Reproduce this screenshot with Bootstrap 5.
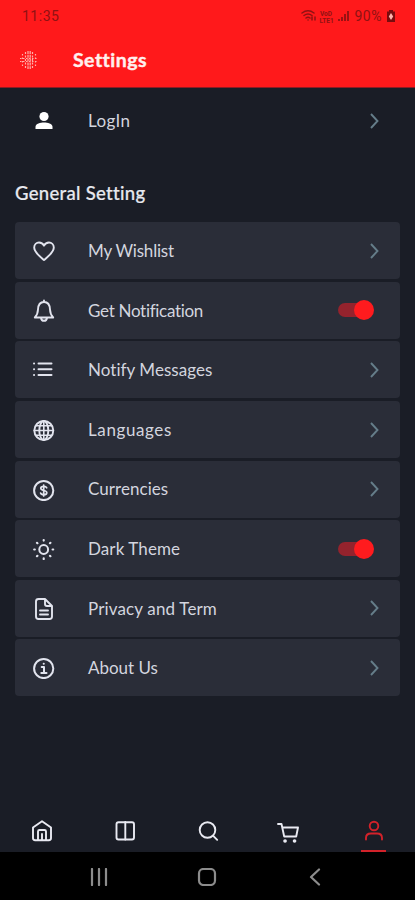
<!DOCTYPE html>
<html lang="en">
<head>
<meta charset="utf-8">
<meta name="viewport" content="width=device-width, initial-scale=1">
<title>Settings</title>
<link href="https://cdn.jsdelivr.net/npm/bootstrap@5.3.0/dist/css/bootstrap.min.css" rel="stylesheet">
<style>
body{background:#1a1d26;font-family:Lato,"Open Sans",sans-serif;font-variant-ligatures:none;color:#d3d5df;overflow:hidden}
svg{display:block;flex:none;fill:none;stroke:currentColor;stroke-width:1.9;stroke-linecap:round;stroke-linejoin:round}
.screen{height:900px}
.topbar{height:88px;background:#ff191b;border-bottom:1px solid #8f1b22}
.status{height:32px;padding:0 19px 0 22px;color:#8f1213;font:14px/32px Roboto,sans-serif}
.status svg{stroke-width:1.3}
.clock,.pct{letter-spacing:.5px}
.title-row{height:56px;padding-left:20px}
.title-row h1{font-size:19.5px;font-weight:700;color:#fff0ee;margin-left:35px;letter-spacing:.45px;-webkit-text-stroke:.4px}
.entry{height:57px;padding:0 20px 0 17px;background:#2a2d38;border-radius:4px;margin-bottom:2.6px;font-size:17px}
.entry .ico{width:23px;height:23px;color:#e2e4ee}
.entry .lbl{margin-left:33px;white-space:nowrap}
.entry .chev{width:12px;height:18px;color:#657d89;stroke-width:1.9;stroke-linecap:butt;stroke-linejoin:miter}
.l0{letter-spacing:.4px}.l1{letter-spacing:-.2px}.l2{letter-spacing:-.3px}.l3{letter-spacing:.04px}.l4{letter-spacing:.6px}.l5{letter-spacing:.05px}.l6{letter-spacing:.1px}.l7{letter-spacing:.15px}.l8{letter-spacing:-.03px}
.login{background:transparent;margin:4px 15px 0}
.login .ico{color:#fff;fill:currentColor;stroke:none}
.heading{font-size:18.5px;font-weight:500;margin:28px 0 0 15px;height:32px;line-height:32px;color:#e8e9ef;letter-spacing:.3px;-webkit-text-stroke:.2px}
.entries{margin:13.3px 15px 0}
.entry .form-switch{padding:0;min-height:0;margin:0 6px 0 0}
.toggle{width:36px;height:20px;border-radius:10px;position:relative}
.toggle::before{content:"";position:absolute;left:0;top:3px;width:32px;height:14px;border-radius:7px;background:#94232d}
.toggle::after{content:"";position:absolute;right:0;top:0;width:20px;height:20px;border-radius:50%;background:#ff1b1e}
.tabs{height:42px;color:#e9eaf2}
.tabs a{color:inherit;width:83px}
.tabs .active{color:#d2222a}
.tabs .bar{width:25px;height:2.5px;background:#d2222a}
.sys{height:48px;background:#000;color:#8c8c8c;padding:2px 46px 0 45px}
.sys svg{stroke-width:2.2}
</style>
</head>
<body>
<div class="screen d-flex flex-column">
  <header class="topbar">
    <div class="status d-flex align-items-center">
      <span class="clock me-auto">11:35</span>
      <svg width="50" height="18" viewBox="0 0 50 18"><path d="M1 6q6-4.500 12 0M3 8.500q4-3 8 0M5 11q2-1.500 4 0M7 13h.1M11 10v3m3-3v3" stroke-width="1.500"/><text x="19" y="8.500" font-size="6.500" font-weight="700" fill="currentColor" stroke="none">VoD</text><text x="18.500" y="15.500" font-size="6.500" font-weight="700" fill="currentColor" stroke="none">LTE1</text><path d="M38 14v-2M41 14v-4M44 14V7M47 14V4" stroke-width="1.800" stroke-linecap="butt"/></svg>
      <span class="ms-1 pct">90%</span>
      <svg class="ms-1" width="10" height="14" viewBox="0 0 10 14"><path d="M3 1h4v1.500h2V13H1V2.500h2z" fill="#780c0e" stroke="none"/><path d="M5 4L2.800 7.500 5 11l2.200-3.500z" fill="#ffb3ad" stroke="none"/></svg>
    </div>
    <div class="title-row d-flex align-items-center">
      <svg width="18" height="20" viewBox="0 0 18 20" color="#ffb0aa"><g stroke-width="1.200" stroke-linecap="butt"><path d="M0 8.500h18M0 11.500h18" stroke-dasharray="1.500 1.500"/><path d="M2.500 4v12M15.500 4v12" stroke-dasharray="1.500 2"/><path d="M5.500 2v17M12.500 2v17" stroke-dasharray="2 1.500"/><path d="M8 1v18M10.200 1v18" stroke-dasharray="3 .8"/></g></svg>
      <h1 class="mb-0">Settings</h1>
    </div>
  </header>

  <main class="flex-grow-1">
    <div class="entry login d-flex align-items-center">
      <svg class="ico" viewBox="0 0 23 23"><circle cx="12" cy="7.500" r="4.600"/><path d="M3.500 20v-2.200c0-3 5-4.300 8.500-4.300s8.500 1.300 8.500 4.300V20z"/></svg>
      <span class="lbl me-auto l0">LogIn</span>
      <svg class="chev" viewBox="0 0 12 18"><path d="M3 2l6.500 7L3 16"/></svg>
    </div>
    <h2 class="heading">General Setting</h2>
    <div class="entries">
      <div class="entry d-flex align-items-center">
        <svg class="ico" viewBox="0 0 23 23"><path d="M12 21C8 17.500 2.200 13.500 2.200 8.500 2.200 5.500 4.500 3.500 7 3.500c2.200 0 4 1.200 5 3.200 1-2 2.800-3.200 5-3.200 2.500 0 4.800 2 4.800 5C21.800 13.500 16 17.500 12 21z"/></svg>
        <span class="lbl me-auto l1">My Wishlist</span>
        <svg class="chev" viewBox="0 0 12 18"><path d="M3 2l6.500 7L3 16"/></svg>
      </div>
      <div class="entry d-flex align-items-center">
        <svg class="ico" viewBox="0 0 23 23"><path d="M2.800 18.500c2-2 3-3.500 3.200-8C6.200 6 8.500 3 12 3s5.800 3 6 7.500c.2 4.500 1.200 6 3.200 8zM12 1.500V3M9 19c.3 2 1.500 2.800 3 2.800s2.700-.8 3-2.800"/></svg>
        <span class="lbl me-auto l2">Get Notification</span>
        <div class="form-switch"><div class="toggle" role="switch" aria-checked="true"></div></div>
      </div>
      <div class="entry d-flex align-items-center">
        <svg class="ico" viewBox="0 0 23 23"><path d="M6.500 5.500H19.500M6.500 11.300H19.500M6.500 17H19.500M2 5.500h.1M2 11.300h.1M2 17h.1" stroke-width="2"/></svg>
        <span class="lbl me-auto l3">Notify Messages</span>
        <svg class="chev" viewBox="0 0 12 18"><path d="M3 2l6.500 7L3 16"/></svg>
      </div>
      <div class="entry d-flex align-items-center">
        <svg class="ico" viewBox="0 0 23 23"><circle cx="11.800" cy="12.500" r="9.500"/><ellipse cx="11.800" cy="12.500" rx="4.500" ry="9.500"/><path d="M11.800 3v19M2.300 12.500h19M4 7.800h15.600M4 17.200h15.600" stroke-width="1.600"/></svg>
        <span class="lbl me-auto l4">Languages</span>
        <svg class="chev" viewBox="0 0 12 18"><path d="M3 2l6.500 7L3 16"/></svg>
      </div>
      <div class="entry d-flex align-items-center">
        <svg class="ico" viewBox="0 0 23 23"><circle cx="11.700" cy="12.500" r="9.600" stroke-width="2"/><path d="M14.700 9.800c-.4-1-1.500-1.500-3-1.500-1.700 0-2.900.7-2.900 2 0 3 6 1.400 6 4.400 0 1.300-1.200 2-3 2-1.700 0-2.900-.6-3.200-1.700M11.700 7v11" stroke-width="1.700"/></svg>
        <span class="lbl me-auto l5">Currencies</span>
        <svg class="chev" viewBox="0 0 12 18"><path d="M3 2l6.500 7L3 16"/></svg>
      </div>
      <div class="entry d-flex align-items-center">
        <svg class="ico" viewBox="0 0 23 23"><circle cx="11.700" cy="12.500" r="4.400" stroke-width="2"/><path d="M11.700 3v.6M11.700 21.400v.6M2.200 12.500h.6M20.600 12.500h.6M5 5.800l.4.400M18 18.800l.4.400M5 19.200l.4-.4M18 6.200l.4-.4" stroke-width="2.200"/></svg>
        <span class="lbl me-auto l6">Dark Theme</span>
        <div class="form-switch"><div class="toggle" role="switch" aria-checked="true"></div></div>
      </div>
      <div class="entry d-flex align-items-center">
        <svg class="ico" viewBox="0 0 23 23"><path d="M13 2H6.500Q4 2 4 4.500v15Q4 22 6.500 22h11q2.500 0 2.500-2.500V9zM13 2v5q0 2 2 2h5M8 13.500h8M8 17.500h8"/></svg>
        <span class="lbl me-auto l7">Privacy and Term</span>
        <svg class="chev" viewBox="0 0 12 18"><path d="M3 2l6.500 7L3 16"/></svg>
      </div>
      <div class="entry d-flex align-items-center">
        <svg class="ico" viewBox="0 0 23 23"><circle cx="11.700" cy="12.500" r="9.600" stroke-width="2"/><path d="M9.700 11h2.300v6M9.300 17h5.200M11.700 7.700h.1" stroke-width="2"/></svg>
        <span class="lbl me-auto l8">About Us</span>
        <svg class="chev" viewBox="0 0 12 18"><path d="M3 2l6.500 7L3 16"/></svg>
      </div>
    </div>
  </main>

  <nav class="tabs d-flex">
    <a href="#" aria-label="Home" class="d-flex justify-content-center"><svg width="22" height="42" viewBox="0 0 22 42"><path d="M2 17.500l9-6.300 9 6.300v10.500q0 2.200-2.200 2.200H4.200q-2.200 0-2.200-2.200zM7 30v-8.500q0-1.500 1.500-1.500h5q1.500 0 1.500 1.500V30M11 24v6"/></svg></a>
    <a href="#" aria-label="Categories" class="d-flex justify-content-center"><svg width="22" height="42" viewBox="0 0 22 42"><rect x="2.500" y="12.200" width="17.500" height="17.300" rx="2"/><path d="M11.300 12v17.500"/></svg></a>
    <a href="#" aria-label="Search" class="d-flex justify-content-center"><svg width="22" height="42" viewBox="0 0 22 42"><circle cx="10.500" cy="20" r="7.800"/><path d="M16.200 25.800l4 4"/></svg></a>
    <a href="#" aria-label="Cart" class="d-flex justify-content-center"><svg width="28" height="42" viewBox="0 0 28 42"><path d="M1 14H4.500l2.700 12.500h12L21 17.500H5.500"/><path d="M8 31h.1M17.500 31h.1" stroke-width="3.600"/></svg></a>
    <a href="#" aria-label="Account" class="active d-flex flex-column align-items-center"><svg width="22" height="39.500" viewBox="0 0 22 39.500"><circle cx="11" cy="16" r="4.300"/><path d="M3 29.500V28q0-4.500 5-4.500h6q5 0 5 4.500v1.500"/></svg><span class="bar"></span></a>
  </nav>
  <div class="sys d-flex">
    <div class="col d-flex justify-content-center align-items-center"><svg width="18" height="18" viewBox="0 0 18 18" stroke-linecap="butt"><path d="M2 1v16M9 1v16M16 1v16"/></svg></div>
    <div class="col d-flex justify-content-center align-items-center"><svg width="20" height="18" viewBox="0 0 20 18"><rect x="2" y="1" width="16" height="16" rx="4.500"/></svg></div>
    <div class="col d-flex justify-content-center align-items-center"><svg width="12" height="18" viewBox="0 0 12 18"><path d="M10 1.500L2 9l8 7.500"/></svg></div>
  </div>
</div>
<script src="https://cdn.jsdelivr.net/npm/bootstrap@5.3.0/dist/js/bootstrap.bundle.min.js"></script>
</body>
</html>
